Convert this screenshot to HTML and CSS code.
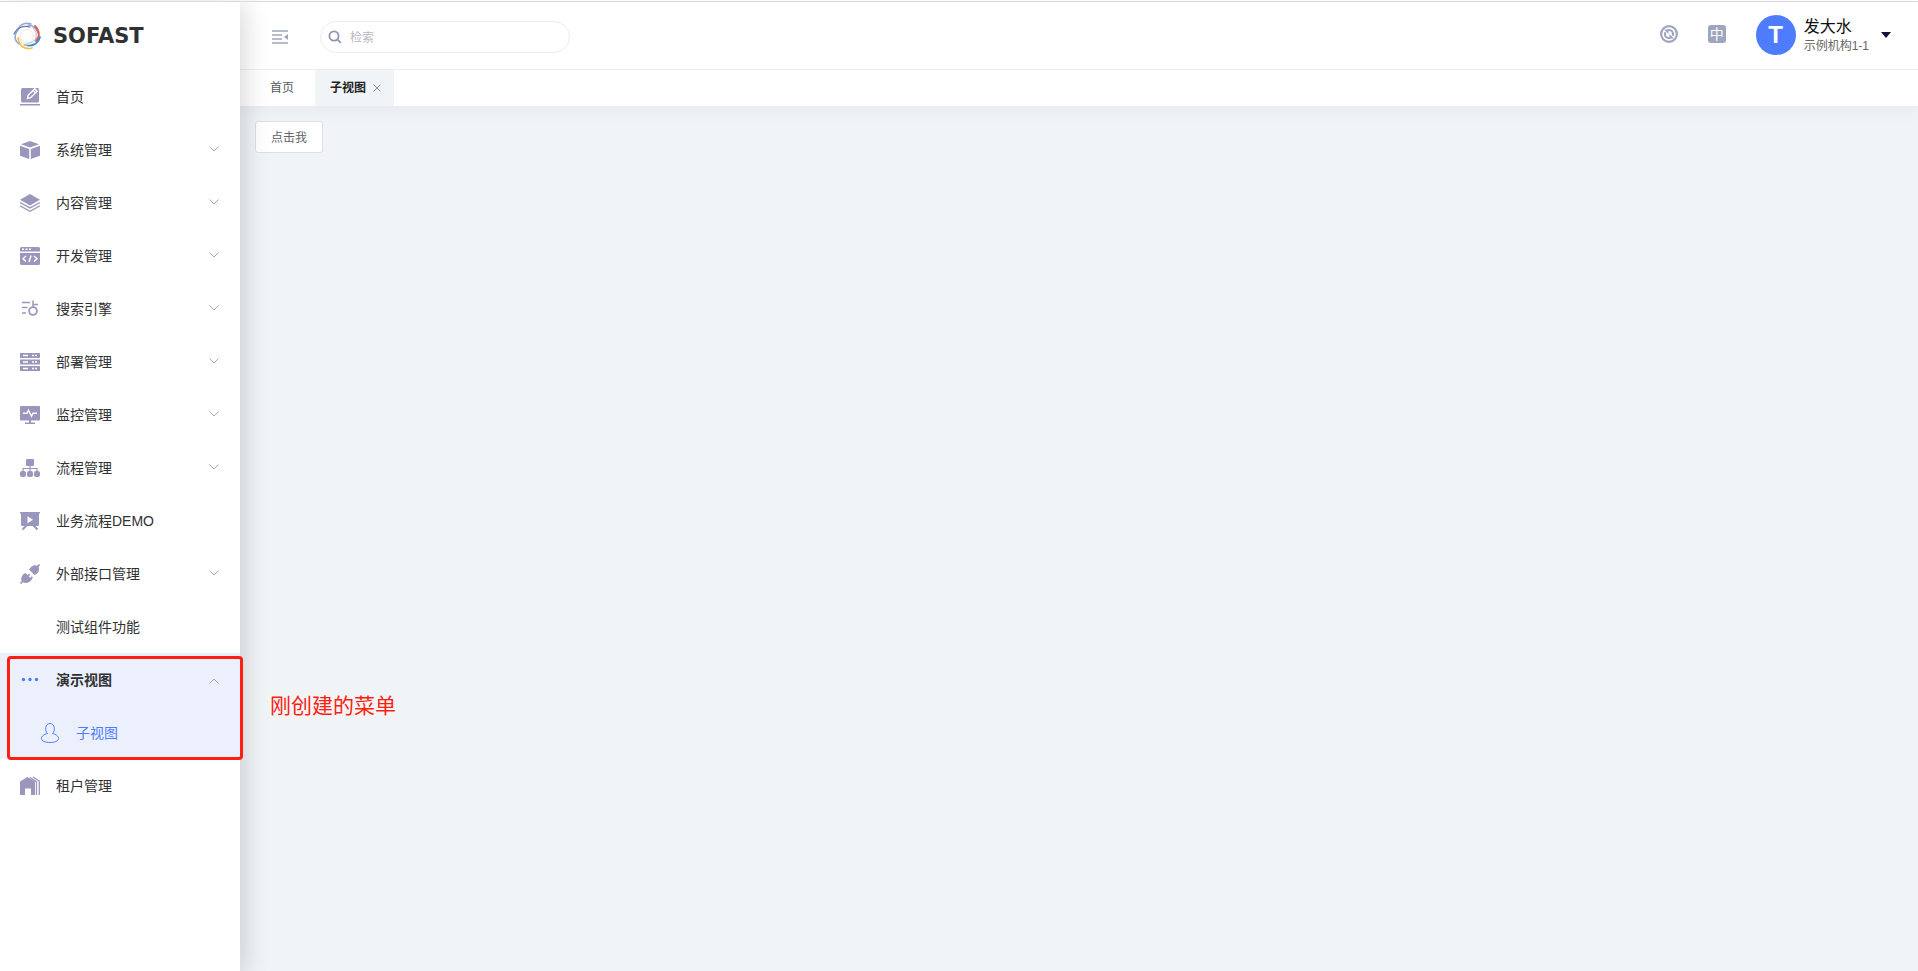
FILE: index.html
```html
<!DOCTYPE html>
<html lang="zh-CN">
<head>
<meta charset="utf-8">
<title>SOFAST</title>
<link rel="stylesheet" href="styles.css">
</head>
<body>
<svg class="defs" aria-hidden="true">
  <symbol id="down" viewBox="0 0 12 12"><path d="M1.500 2.500 6 7l4.500-4.500" fill="none" stroke="currentColor"/></symbol>
</svg>
<div class="app">
  <aside class="sidebar">
    <a class="brand" href="#">
      <svg class="brand-mark" viewBox="0 0 28 28" fill="none" stroke-linecap="round">
        <path d="M4 8C7 3 12 0 18 2" stroke="#8fa6d8" stroke-width="1.500"/>
        <path d="M1 12C4 6 10 3 17 5" stroke="#6d73a8" stroke-width="1.300"/>
        <path d="M15 3c5 0 9 4 10 8" stroke="#86a9e0" stroke-width="1.500"/>
        <path d="M22 4c5 5 5 11 1 15" stroke="#db5b4c" stroke-width="1.800"/>
        <path d="M20 6c4 4 4 8 2 12" stroke="#eda79e"/>
        <path d="M27 15c-2 7-8 10-15 8" stroke="#3f8ccb" stroke-width="1.800"/>
        <path d="M24 15c-2 4-6 7-11 6" stroke="#8fc1e6"/>
        <path d="M19 26C12 28 6 24 5 16" stroke="#f1c04c" stroke-width="1.800"/>
        <path d="M14 24c-4-1-7-4-7-8" stroke="#f4d88e"/>
        <path d="M6 22C1 18 1 13 5 8" stroke="#8fa6d8" stroke-width="1.500"/>
        <circle cx="14" cy="14" r="6.500" stroke="#e8e9f1"/>
      </svg>
      <span class="brand-name">SOFAST</span>
    </a>
    <nav>
      <ul class="menu">
        <li><a class="item" href="#"><svg class="icon" viewBox="0 0 20 20"><rect x="1" y="1" width="18" height="14.500" rx="1.500"/><path d="M0 17h20v1.500H0z"/><path class="cut-line" d="m7.500 11.500.7-3.200 6.500-6.500 2.400 2.400-6.500 6.500zM13.200 3.500l2.400 2.400"/></svg><span>首页</span></a></li>
        <li><button class="item" type="button"><svg class="icon" viewBox="0 0 20 20"><path d="M10 1 19 4.200 10 7.500 1 4.200zM0 5.800l9.200 3.300V19L0 15.700zM20 5.800l-9.200 3.300V19l9.200-3.300z"/></svg><span>系统管理</span><svg class="chevron"><use href="#down"/></svg></button></li>
        <li><button class="item" type="button"><svg class="icon" viewBox="0 0 20 20"><path d="m10 1 10 5.700-10 5.700L0 6.700z"/><path class="line" d="m0 9.500 10 5.400 10-5.400M0 12.800l10 5.400 10-5.400" stroke-width="1.300"/></svg><span>内容管理</span><svg class="chevron"><use href="#down"/></svg></button></li>
        <li><button class="item" type="button"><svg class="icon" viewBox="0 0 20 20"><path d="M0 5.500V2.500Q0 1 1.500 1h17Q20 1 20 2.500v3zM0 7h20v10.500q0 1.500-1.500 1.500h-17Q0 19 0 17.500z"/><path class="cut-line" d="M2 3.300h2M5.500 3.300h2M9 3.300h2M6 10l-3 2.700L6 15.500M14 10l3 2.700-3 2.800M11 9.500l-2 6.500"/></svg><span>开发管理</span><svg class="chevron"><use href="#down"/></svg></button></li>
        <li><button class="item" type="button"><svg class="icon" viewBox="0 0 20 20"><path class="line" d="M2 3.500h8M2 8.500h5.500M2 14h4M13 1.500V8M13 5.500h5" stroke-width="1.500"/><circle class="line" cx="13" cy="12" r="3.900" stroke-width="1.800"/></svg><span>搜索引擎</span><svg class="chevron"><use href="#down"/></svg></button></li>
        <li><button class="item" type="button"><svg class="icon" viewBox="0 0 20 20"><path d="M0 1h20v5H0zM0 7.500h20v5H0zM0 14h20v5H0z"/><path class="cut-line" d="M3 3.500h5M12 3.500h2M15 3.500h2M3 10h5M12 10h2M15 10h2M3 16.500h5M12 16.500h2M15 16.500h2"/></svg><span>部署管理</span><svg class="chevron"><use href="#down"/></svg></button></li>
        <li><button class="item" type="button"><svg class="icon" viewBox="0 0 20 20"><rect y="1" width="20" height="14.500" rx="1"/><path d="M9 15h2v2.500h4V19H5v-1.500h4z"/><path class="cut-line" d="M3 8.300h4l1.500-3 3 6 1.500-3h4"/></svg><span>监控管理</span><svg class="chevron"><use href="#down"/></svg></button></li>
        <li><button class="item" type="button"><svg class="icon" viewBox="0 0 20 20"><rect x="6" y="1" width="8" height="7" rx="1"/><path class="line" d="M10 8v6M3 13.500v-3h14v3" stroke-width="1.200"/><rect y="13" width="6" height="6" rx="2"/><rect x="7" y="13" width="6" height="6" rx="2"/><rect x="14" y="13" width="6" height="6" rx="2"/></svg><span>流程管理</span><svg class="chevron"><use href="#down"/></svg></button></li>
        <li><a class="item" href="#"><svg class="icon" viewBox="0 0 20 20"><path d="M0 1h20v1.500h-1v11q0 1.500-1.500 1.500h-15Q1 15 1 13.500v-11H0z"/><path class="line" d="m6.500 14.500-4 4M13.500 14.500l4 4" stroke-width="2"/><path class="cut" d="M7.500 5.200v7L13 8.700z"/></svg><span>业务流程DEMO</span></a></li>
        <li><button class="item" type="button"><svg class="icon" viewBox="0 0 20 20"><path class="line" d="M.5 19.500 4 16M16 4 19.500.5" stroke-width="1.700"/><path d="M9 5.500Q11 2 14 1.300q3-.5 4.500 1.500 1.500 2.500 0 5Q17 10.500 14.500 11zM5.500 9l2 2 1.500-1.500 1.200 1.200L8.700 12.200l1.600 1.600 1.500-1.500L13 13.500 11.500 15l.5.500Q9.500 18.500 6.500 19 3 19.300 1.700 17 .5 14.500 2 12q1.300-2.300 3.500-3z"/></svg><span>外部接口管理</span><svg class="chevron"><use href="#down"/></svg></button></li>
        <li><a class="item" href="#"><span class="icon"></span><span>测试组件功能</span></a></li>
        <li class="open">
          <button class="item" type="button" aria-expanded="true"><svg class="icon" viewBox="0 0 20 20"><circle cx="3.500" cy="9.500" r="1.700"/><circle cx="10" cy="9.500" r="1.700"/><circle cx="16.500" cy="9.500" r="1.700"/></svg><span>演示视图</span><svg class="chevron up"><use href="#down"/></svg></button>
          <ul class="menu">
            <li><a class="item sub" href="#" aria-current="page"><svg class="icon" viewBox="0 0 20 20"><path class="line" d="M7.500 10.500C4.500 8 5 .5 10 .5s5.500 7.500 2.500 10c3.500.8 6 2.500 6 5 0 2.700-4 4-8.500 4s-8.500-1.300-8.500-4c0-2.500 2.500-4.200 6-5z"/></svg><span>子视图</span></a></li>
          </ul>
        </li>
        <li><a class="item" href="#"><svg class="icon" viewBox="0 0 20 20"><path d="M0 19V5.500L7.500 1 15 5.500V19h-4v-6.500H5V19z"/><path class="line" d="m10 1.500 6.500 4.200V19M13 1l6.300 4V19" stroke-width="1.300"/></svg><span>租户管理</span></a></li>
      </ul>
    </nav>
    <div class="mark-box"></div>
    <p class="mark-text">刚创建的菜单</p>
  </aside>
  <div class="page">
    <div class="top">
      <header class="header">
        <button class="tool fold" type="button" aria-label="收起菜单"><svg width="16" height="14" viewBox="0 0 16 14"><path d="M0 1h16M0 5h10M0 9h10M0 13h16" fill="none" stroke="currentColor" stroke-width="1.500"/><path d="M16 4v6l-4-3z" fill="currentColor"/></svg></button>
        <label class="search">
          <svg width="14" height="14" viewBox="0 0 14 14" fill="none" stroke="currentColor" stroke-width="1.800"><circle cx="6" cy="6" r="4.600"/><path d="m9.300 9.300 3.500 3.500"/></svg>
          <input type="search" placeholder="检索" aria-label="检索">
        </label>
        <div class="tools">
          <button class="tool" type="button" aria-label="刷新"><svg width="18" height="18" viewBox="0 0 18 18"><circle cx="9" cy="9" r="7.900" fill="none" stroke="currentColor" stroke-width="2.200"/><path d="M7.500 5.200C11 4 14 7 12.800 10.800M10.500 12.800C7 14 4 11 5.200 7.200" fill="none" stroke="currentColor" stroke-width="2"/><path d="M4 4.500h4.500v4.500zM14 13.500H9.500V9z" fill="currentColor"/></svg></button>
          <button class="tool lang" type="button">中</button>
        </div>
        <button class="user" type="button">
          <span class="avatar">T</span>
          <span class="who"><span class="name">发大水</span><span class="org">示例机构1-1</span></span>
          <svg class="caret" width="10" height="6" viewBox="0 0 10 6"><path d="M0 0h10L5 6z" fill="currentColor"/></svg>
        </button>
      </header>
      <nav class="tabs">
        <a class="tab" href="#">首页</a>
        <div class="tab active"><a href="#">子视图</a><button class="close" type="button" aria-label="关闭"><svg width="8" height="8" viewBox="0 0 8 8"><path d="m.5.5 7 7M7.500.5l-7 7" fill="none" stroke="currentColor"/></svg></button></div>
      </nav>
    </div>
    <main class="content">
      <button class="btn" type="button">点击我</button>
    </main>
  </div>
</div>
</body>
</html>
```
FILE: styles.css
```css
* { box-sizing: border-box; }
body {
  margin: 0;
  font: 14px/20px "Liberation Sans", "Noto Sans CJK SC", sans-serif;
  color: #303133;
}
a { color: inherit; text-decoration: none; }
button { padding: 0; border: 0; background: none; font: inherit; color: inherit; cursor: pointer; }
svg { display: block; flex: none; }
.defs { position: absolute; width: 0; height: 0; }

.app {
  display: flex;
  min-height: 100vh;
  border-top: 1px solid #fff;
  background: #f0f4f7;
}
.app::before {
  content: "";
  position: absolute;
  inset: 1px 0 auto;
  z-index: 3;
  height: 1px;
  background: #d9dcde;
}

.sidebar {
  position: relative;
  z-index: 2;
  flex: none;
  width: 240px;
  background: #fff;
  box-shadow: 4px 4px 24px rgba(0, 0, 0, .16);
}
.brand { display: flex; align-items: center; gap: 12px; height: 69px; padding: 2px 13px; }
.brand-mark { width: 28px; height: 28px; }
.brand-name { font: bold 21px/24px "DejaVu Sans", sans-serif; color: #2f3133; }

.menu { margin: 0; padding: 0; list-style: none; }
.item {
  display: flex;
  align-items: center;
  gap: 16px;
  width: 100%;
  height: 53px;
  padding: 0 20px;
  text-align: left;
}
.sub { padding-left: 40px; color: #4f7cff; }
.icon { flex: none; width: 20px; height: 20px; fill: #9a97bc; color: #9a97bc; }
.line { fill: none; stroke: currentColor; }
.cut { fill: #fff; }
.cut-line { fill: none; stroke: #fff; stroke-width: 1.4px; }
.chevron { width: 12px; height: 12px; margin-left: auto; color: #a5a8b0; }
.up { transform: rotate(180deg); }
.open { background: #ecf0fd; }
.open .icon { fill: #4f7cff; color: #4f7cff; }
.open > .item { font-weight: bold; }

.mark-box {
  position: absolute;
  top: 655px;
  left: 7px;
  width: 236px;
  height: 104px;
  border: 3px solid #ff1e10;
  border-radius: 4px;
  pointer-events: none;
}
.mark-text {
  position: absolute;
  top: 690px;
  left: 270px;
  margin: 0;
  font-size: 21px;
  line-height: 30px;
  white-space: nowrap;
  color: #ff1e10;
}

.page { flex: 1; min-width: 0; }
.top { position: relative; background: #fff; box-shadow: 0 4px 16px rgba(31, 45, 90, .05); }
.header {
  display: flex;
  align-items: center;
  height: 69px;
  padding: 4px 27px 0 32px;
  border-bottom: 1px solid #eeeff1;
}
.tool { color: #a0a5bf; }
.search {
  display: flex;
  align-items: center;
  gap: 8px;
  width: 250px;
  height: 32px;
  margin-left: 32px;
  padding: 0 7px;
  border: 1px solid #ecedef;
  border-radius: 16px;
  color: #9095b0;
}
.search input {
  flex: 1;
  min-width: 0;
  padding: 2px 0 0;
  border: 0;
  outline: 0;
  background: none;
  font: inherit;
  font-size: 12px;
}
.search input::placeholder { color: #b8bac2; }
.tools { display: flex; gap: 30px; margin: 0 30px 6px auto; }
.lang {
  width: 18px;
  height: 18px;
  border-radius: 3px;
  background: #a0a5bf;
  font-size: 14px;
  line-height: 18px;
  color: #fff;
}
.user { display: flex; align-items: center; margin-bottom: 4px; text-align: left; }
.avatar {
  width: 40px;
  height: 40px;
  margin-right: 8px;
  border-radius: 50%;
  background: #4f7cff;
  font-size: 24px;
  font-weight: bold;
  line-height: 40px;
  text-align: center;
  color: #fff;
}
.who { display: grid; margin-right: 12px; padding-top: 2px; }
.name { font-size: 16px; line-height: 20px; color: #111; }
.org { font-size: 12px; line-height: 18px; color: #666; }
.caret { color: #11113a; }

.tabs { display: flex; height: 36px; padding-left: 15px; font-size: 12px; color: #55585e; }
.tab { display: flex; align-items: center; gap: 7px; padding: 0 15px; }
.tab.active { margin-left: 6px; padding: 0 13px 0 15px; background: #f0f4f7; font-weight: bold; color: #222; }
.close { color: #909399; }

.content { padding: 15px; }
.btn {
  height: 32px;
  padding: 1px 15px 0;
  border: 1px solid #dcdfe6;
  border-radius: 3px;
  background: #fff;
  font-size: 12px;
  color: #606266;
}
```
